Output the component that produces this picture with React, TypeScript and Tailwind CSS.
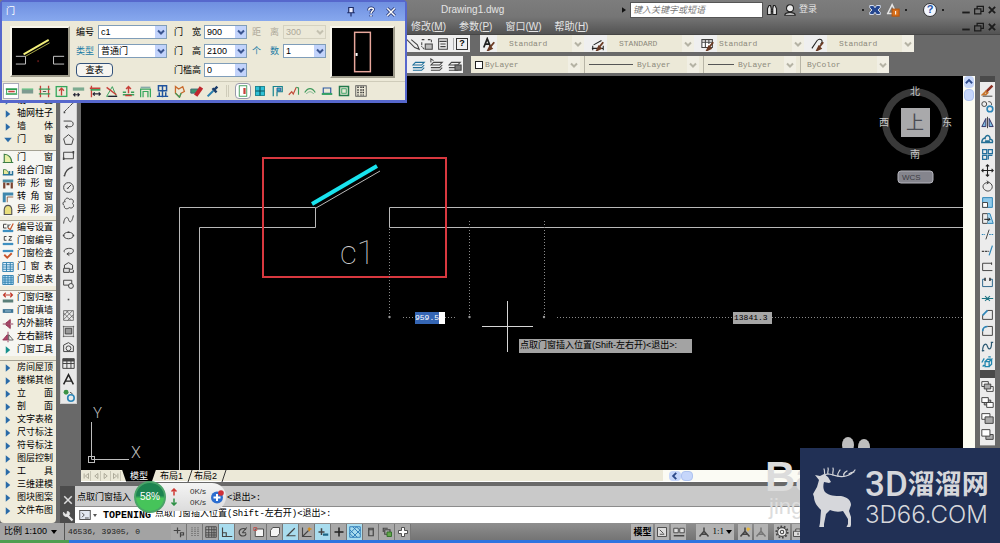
import React, { useState } from "react";

interface IconProps {
  children: React.ReactNode;
  className?: string;
  stroke?: string;
}

interface ToolProps {
  label: string;
  className?: string;
  children: React.ReactNode;
}

interface ComboProps {
  label: string;
  value: string;
  className?: string;
  disabled?: boolean;
}

const Icon = ({ children, className = "h-3.5 w-3.5", stroke = "#444444" }: IconProps) => (
  <svg viewBox="0 0 16 16" className={`block shrink-0 ${className}`} fill="none" stroke={stroke} strokeWidth="1.2">
    {children}
  </svg>
);

const Tool = ({ label, className = "", children }: ToolProps) => (
  <button aria-label={label} title={label} className={`flex shrink-0 items-center justify-center ${className}`}>
    {children}
  </button>
);

const Chevron = ({ stroke }: { stroke: string }) => (
  <svg viewBox="0 0 10 10" className="h-2.5 w-2.5" fill="none" stroke={stroke} strokeWidth="2">
    <path d="M2 3.5 L5 6.5 L8 3.5" />
  </svg>
);

const Combo = ({ label, value, className = "w-[43px]", disabled = false }: ComboProps) => (
  <div className={`relative h-[14px] border ${disabled ? "border-[#d5d2c0]" : "border-[#7f9db9]"} ${className}`}>
    <select
      aria-label={label}
      disabled={disabled}
      className={`block h-full w-full appearance-none pl-0.5 text-[9px] leading-3 ${
        disabled ? "bg-[#ece9d8] text-[#aca899]" : "bg-white text-black"
      }`}
    >
      <option>{value}</option>
    </select>
    <span
      className={`pointer-events-none absolute inset-y-0 right-0 flex w-[11px] items-center justify-center ${
        disabled ? "bg-[#ebe8d8]" : "bg-[#c2d3fb]"
      }`}
    >
      <Chevron stroke={disabled ? "#c4c1b0" : "#3a5590"} />
    </span>
  </div>
);

const FlatCombo = ({ label, value, className = "" }: ComboProps) => (
  <div className="relative h-full">
    <select
      aria-label={label}
      className={`block h-full appearance-none bg-[#ece9d8] font-['Liberation_Mono',monospace] text-[8px] text-[#8c8a7c] ${className}`}
    >
      <option>{value}</option>
    </select>
    <span className="pointer-events-none absolute inset-y-0 right-0 flex w-3 items-center justify-center bg-[#f1efe4]">
      <Chevron stroke="#b5b3a5" />
    </span>
  </div>
);

/* ---------- door dialog ---------- */

const doorTools = [
  { name: "自由插入", art: <><path d="M1 5h14M1 11h14" stroke="#2e9e50" strokeWidth="2" /><path d="M4 8h8" stroke="#c8413a" strokeWidth="2" /><path d="M2 6v4M14 6v4" stroke="#2e9e50" /></> },
  { name: "沿墙插入", art: <><path d="M1 8h14" stroke="#7d9a90" strokeWidth="5" /><path d="M1 5h14" stroke="#36b768" /></> },
  { name: "轴线等分", art: <><path d="M3 1v14M13 1v14" stroke="#c8413a" strokeWidth="1.6" /><path d="M1 5h14M1 11h14" stroke="#37a05a" strokeWidth="1.6" /><path d="M6 8h4" stroke="#555" /></> },
  { name: "墙段等分", art: <><rect x="1.500" y="2" width="13" height="12" stroke="#36a75c" strokeWidth="1.6" /><path d="M8 13V5M5 7l3-3 3 3" stroke="#c8413a" strokeWidth="1.6" /></> },
  { name: "垛宽定距", art: <><path d="M1 5h14" stroke="#7dab90" strokeWidth="4" /><path d="M2 12h7M4 10l-2 2 2 2M7 10l2 2-2 2" stroke="#223" strokeWidth="1.4" /></> },
  { name: "轴线定距", art: <><path d="M3 1v14M1 4h13" stroke="#c8413a" strokeWidth="1.6" /><path d="M2 6h12" stroke="#37a05a" strokeWidth="2" /><path d="M5 11h9M7 9l-2 2 2 2M12 9l2 2-2 2" stroke="#223" strokeWidth="1.4" /></> },
  { name: "按角度插入", art: <><path d="M2 14L9 2l5 12z" stroke="#37a05a" /><path d="M2 3l12 9" stroke="#c8413a" strokeWidth="1.8" /><path d="M4 14h11" stroke="#223" strokeWidth="1.6" /></> },
  { name: "满墙插入", art: <><path d="M1 12h14M1 9h4M11 9h4" stroke="#37a05a" strokeWidth="1.8" /><path d="M8 10V2M5 5l3-3 3 3M4 13h8" stroke="#c8413a" strokeWidth="1.8" /></> },
  { name: "插入上层", art: <><path d="M2 15V5h12v10M5 15V8h6v7" stroke="#36a75c" strokeWidth="1.5" /><path d="M2 3h12" stroke="#8aa" strokeWidth="2" /></> },
  { name: "洞口", art: <><path d="M3 1h10v6H3zM3 7h10M8 1v14M1 14h14M4 9v5M12 9v5" stroke="#21549e" strokeWidth="1.8" /></> },
  { name: "异形插入", art: <><path d="M3 2l4 3 5-3 2 6-4 2-2 5-5-5z" stroke="#c96a2c" strokeWidth="1.6" /><path d="M3 10l5 5 2-5" stroke="#3f9a5b" strokeWidth="1.6" /></> },
  { name: "替换", art: <><path d="M1 5h9v5H1z" fill="#3e9a74" stroke="#3e6a74" /><path d="M7 13l7-10" stroke="#c0272d" strokeWidth="5" /></> },
  { name: "拾取参数", art: <><path d="M2 14l7-7" stroke="#2b7fae" strokeWidth="2.500" /><path d="M8 4l5 5M10 6l4-4" stroke="#1b3d6b" strokeWidth="3" /></> },
];

const kindTools = [
  { name: "插门", art: <><rect x="3" y="1" width="10" height="14" stroke="#3c9a58" /><path d="M10 4v8" stroke="#c8413a" strokeWidth="3" /></> },
  { name: "插窗", art: <><rect x="2" y="2" width="12" height="12" fill="#2fc0d6" stroke="#16838f" /><path d="M8 2v12M2 8h12" stroke="#08525e" strokeWidth="1.5" /></> },
  { name: "插门连窗", art: <><path d="M3 15V2h12v7H8v6" stroke="#16838f" strokeWidth="1.600" /><path d="M8 4h5v4H8z" fill="#39b4c4" stroke="#2a58a0" /></> },
  { name: "插子母门", art: <><path d="M1 13l4-4 2 3 4-9" stroke="#c04a38" strokeWidth="1.5" /><path d="M11 3l3 1v9" stroke="#3f9a5b" strokeWidth="1.5" /></> },
  { name: "插弧窗", art: <><path d="M1 10c4-7 10-7 14 0" stroke="#3f9a5b" strokeWidth="1.600" /><path d="M3 12c3-4 7-4 10 0" stroke="#79b58b" /></> },
  { name: "插凸窗", art: <><path d="M3 4h10v7H3z" stroke="#2a58a0" strokeWidth="1.5" /><path d="M1 12h14" stroke="#2fa060" strokeWidth="2.500" /></> },
  { name: "插矩形洞", art: <><rect x="2" y="2" width="12" height="12" stroke="#237a4c" strokeWidth="2" /><rect x="5" y="5" width="6" height="6" stroke="#2fa060" /></> },
  { name: "标准构件库", art: <><rect x="1" y="1" width="14" height="14" stroke="#555" /><path d="M4 2v12M8 2v12M11 2v12" stroke="#333" strokeDasharray="2 1.500" strokeWidth="2" /></> },
];

const DoorDialog = () => (
  <section className="absolute left-0 top-0 z-20 w-[407px] rounded-t border-2 border-b-[3px] border-[#5667cc] bg-[#ece9d8]">
    <header className="flex h-[19px] items-center bg-gradient-to-b from-[#6f8fe0] to-[#87a8ee] pl-1 pr-1.5 text-[9px] text-white">
      <h2 className="flex-1">门</h2>
      <div className="flex gap-1">
        <Tool label="固定" className="h-4 w-4">
          <Icon className="h-3 w-3" stroke="#1e2c66"><path d="M5 2h6v7H5zM3 9h10M8 9v5" fill="#eef" strokeWidth="1.600" /></Icon>
        </Tool>
        <Tool label="帮助" className="h-4 w-4">
          <Icon className="h-3 w-3" stroke="#fff">
            <path d="M5 6c0-5 7-4 6-1-1 2-3 2-3 5M8 12v2" stroke="#1e2c66" strokeWidth="4" />
            <path d="M5 6c0-5 7-4 6-1-1 2-3 2-3 5M8 12v2" strokeWidth="2" />
          </Icon>
        </Tool>
        <Tool label="关闭" className="h-4 w-4">
          <Icon className="h-3 w-3" stroke="#fff">
            <path d="M3 3l10 10M13 3L3 13" stroke="#1e2c66" strokeWidth="4" />
            <path d="M3 3l10 10M13 3L3 13" strokeWidth="2" />
          </Icon>
        </Tool>
      </div>
    </header>

    <div className="flex h-[60px] items-start px-2 pt-1">
      <svg viewBox="0 0 58 48" className="mr-1.5 mt-px h-[51px] w-[60px] border-2 border-[#f8f6ec] border-b-[#9d9a8a] border-r-[#9d9a8a] bg-black" fill="none">
        <path d="M12 27L38 12" stroke="#f3f07a" strokeWidth="2" />
        <path d="M14 29L39 15" stroke="#a9a948" />
        <path d="M4 29h10v8H4M54 29H43v8h11" stroke="#c8c8c8" />
        <path d="M27 33v2" stroke="#a02828" />
      </svg>
      <div className="flex flex-col gap-[5px] text-[9px] leading-[14px]">
        <div className="flex gap-1">
          <span className="w-[18px]">编号</span>
          <Combo label="编号" value="c1" className="w-[69px]" />
        </div>
        <div className="flex gap-1">
          <a href="#type" className="w-[18px] text-[#1b7ca6]">类型</a>
          <Combo label="类型" value="普通门" className="w-[69px]" />
        </div>
        <button className="h-[14px] w-[37px] rounded-sm border border-[#33527a] bg-[#f6f5f0] leading-3">查表</button>
      </div>
      <div className="ml-[7px] flex flex-col gap-[5px] text-[9px] leading-[14px]">
        {[["门 宽", "900"], ["门 高", "2100"], ["门槛高", "0"]].map(([name, value]) => (
          <div key={name} className="flex gap-[3px]">
            <span className="w-[27px] [text-align-last:justify]">{name}</span>
            <Combo label={name} value={value} />
          </div>
        ))}
      </div>
      <div className="ml-[5px] flex flex-col gap-[5px] text-[9px] leading-[14px]">
        <div className="flex gap-1">
          <span className="w-[27px] text-[#aca899] [text-align-last:justify]">距 离</span>
          <Combo label="距离" value="300" disabled />
        </div>
        <div className="flex gap-1">
          <a href="#count" className="w-[27px] text-[#1b7ca6] [text-align-last:justify]">个 数</a>
          <Combo label="个数" value="1" />
        </div>
      </div>
      <svg viewBox="0 0 62 48" className="ml-1 mt-px h-[52px] w-[65px] shrink-0 border-2 border-[#f8f6ec] border-b-[#9d9a8a] border-r-[#9d9a8a] bg-black" fill="none">
        <rect x="23" y="4" width="16" height="40" stroke="#e8a79c" strokeWidth="1.500" />
        <path d="M25 25v3" stroke="#fff" strokeWidth="2" />
      </svg>
    </div>

    <div className="flex h-[19px] items-center border-t border-[#cfccba] pl-px">
      <div className="flex w-[218px] items-center justify-between">
        {doorTools.map((t, i) => (
          <Tool key={t.name} label={t.name} className={`h-4 w-4 ${i === 0 ? "border border-[#aab] bg-white" : ""}`}>
            <Icon className="h-[13px] w-[13px]">{t.art}</Icon>
          </Tool>
        ))}
      </div>
      <span className="ml-[5px] mr-1.5 h-3 w-[3px] border-x border-[#cfccba]" />
      <div className="flex w-[134px] items-center justify-between">
        {kindTools.map((t, i) => (
          <Tool key={t.name} label={t.name} className={`h-4 w-4 ${i === 0 ? "rounded-sm border border-[#99a] bg-white" : ""}`}>
            <Icon className="h-3 w-3">{t.art}</Icon>
          </Tool>
        ))}
      </div>
    </div>
  </section>
);

/* ---------- title, menu and style bars ---------- */

const WindowButtons = () => (
  <div className="flex items-center gap-px">
    <Tool label="最小化" className="w-3"><Icon className="h-2.5 w-2.5" stroke="#1c1c1c"><path d="M2 12h12" strokeWidth="3" /></Icon></Tool>
    <Tool label="还原" className="w-3"><Icon className="h-2.5 w-2.5" stroke="#1c1c1c"><path d="M5 5V2h10v8h-4M1 6h10v8H1z" strokeWidth="2" /></Icon></Tool>
    <Tool label="关闭" className="w-3"><Icon className="h-2.5 w-2.5" stroke="#1c1c1c"><path d="M3 3l10 10M13 3L3 13" strokeWidth="3" /></Icon></Tool>
  </div>
);

const TitleBar = () => (
  <header className="h-[35px] border-b border-[#454545] bg-gradient-to-b from-[#7d7d7d] via-[#757575] to-[#535353] text-[10px] text-[#e4e4e4]">
    <div className="flex h-[19px] items-center pl-[441px] pr-0.5">
      <h1 className="flex-1">Drawing1.dwg</h1>
      <svg viewBox="0 0 6 8" className="mr-1 h-2 w-1" fill="#111"><path d="M0 0l6 4-6 4z" /></svg>
      <input
        aria-label="搜索"
        placeholder="键入关键字或短语"
        className="h-4 w-[133px] border border-[#555] bg-white px-0.5 text-[9px] italic placeholder:text-[#777]"
      />
      <Tool label="查找" className="ml-0.5 w-[14px]">
        <Icon className="h-3 w-3" stroke="#222"><path d="M2 6l2-4h2l1 4v8H2zM14 6l-2-4h-2L9 6v8h5zM7 7h2M7 10h2" fill="#e5e5e5" strokeWidth="1.500" /></Icon>
      </Tool>
      <button className="ml-1 flex items-center gap-0.5 text-[9px]">
        <Icon className="h-[14px] w-[14px]" stroke="#222"><circle cx="8" cy="6" r="4" fill="#eee" /><path d="M2 14c0-4 12-4 12 0z" fill="#eee" /></Icon>
        登录
      </button>
      <div className="ml-[45px] flex items-center gap-[5px]">
        <span className="h-0.5 w-0.5 bg-[#222]" />
        <Tool label="交换" className="w-3">
          <Icon className="h-3 w-3" stroke="#dfe6f5"><path d="M1 2h5l2 3 2-3h5v3l-3 3 3 3v3h-5l-2-3-2 3H1v-3l3-3-3-3z" fill="#24468f" /></Icon>
        </Tool>
        <Tool label="应用程序" className="w-3.5">
          <Icon stroke="#e6e6e6"><path d="M2 12L7 2l4 8M1 12h7" strokeWidth="1.800" /><rect x="7" y="7" width="8" height="8" fill="#d8701c" stroke="#b5560e" /><path d="M11 9v4" stroke="#fff" /></Icon>
        </Tool>
        <span className="h-0.5 w-0.5 bg-[#222]" />
      </div>
      <Tool label="帮助" className="ml-4 mr-[5px] h-[14px] w-[14px] rounded-full border border-[#333] bg-[#f4f7ff] text-[11px] font-bold text-[#2455a8]">?</Tool>
      <span className="mr-4 h-0.5 w-0.5 bg-[#222]" />
      <WindowButtons />
    </div>
    <nav className="flex h-4 items-center gap-[13px] pl-[411px] pr-0.5">
      {[["修改", "M"], ["参数", "P"], ["窗口", "W"], ["帮助", "H"]].map(([name, key]) => (
        <button key={key} className="leading-4">{name}(<u>{key}</u>)</button>
      ))}
      <span className="flex-1" />
      <WindowButtons />
    </nav>
  </header>
);

const brush = <path d="M14 6l-5 6M9 11l-2 4 4-2z" stroke="#6b3a24" strokeWidth="2.200" />;
const layers = <path d="M4 5h10l-3 3H1zM1 11h10l3-3M1 14h10l3-3" />;

const StyleBars = () => (
  <div className="flex flex-col gap-1 pb-[3px]">
    <div className="flex h-[17px] pl-[407px]">
      <div className="flex items-center bg-[#efefef] pr-0.5">
        <Tool label="标注" className="w-3"><Icon><path d="M1 3l9 9 5 2-2-5-7-6" /></Icon></Tool>
        <Tool label="参照" className="w-4"><Icon><path d="M2 3h4M9 3h4v4M2 6v5M5 14l-3-3" strokeDasharray="3 1" /><path d="M6 8h8v6H6z" fill="#bbb" /></Icon></Tool>
        <Tool label="计算器" className="w-4"><Icon><path d="M3 2h10v12H3zM4 5h8M5 8h6M5 11h6" /></Icon></Tool>
        <span className="mx-0.5 h-3 border-l border-[#aaa]" />
        <Tool label="帮助" className="h-3 w-3 border border-[#333] text-[9px] font-bold">?</Tool>
      </div>
      <div className="ml-2.5 flex items-center bg-[#efefef]">
        <Tool label="文字样式" className="w-[17px]"><Icon><path d="M2 12L6 2l4 10M3 8h6" stroke="#222" strokeWidth="2" />{brush}</Icon></Tool>
        <FlatCombo label="文字样式" value="Standard" className="w-[87px] pl-3" />
        <Tool label="标注样式" className="ml-1 w-[19px]"><Icon><path d="M1 13h13M2 10v5M14 10v5M3 9l9-5" stroke="#222" />{brush}</Icon></Tool>
        <FlatCombo label="标注样式" value="STANDARD" className="w-[87px] pl-3" />
        <Tool label="表格样式" className="ml-1 w-[19px]"><Icon><path d="M1 3h12v9H1zM1 6h12M5 3v9M9 3v5" fill="#fff" />{brush}</Icon></Tool>
        <FlatCombo label="表格样式" value="Standard" className="w-[87px] pl-0.5" />
        <Tool label="引线样式" className="ml-1 w-[19px]"><Icon><path d="M1 13L7 4c4-4 8 1 4 4" stroke="#222" />{brush}</Icon></Tool>
        <FlatCombo label="引线样式" value="Standard" className="w-[87px] pl-3" />
      </div>
    </div>
    <div className="flex h-[17px] pl-[407px]">
      <div className="flex items-center gap-0.5 bg-[#efefef] pl-1">
        <Tool label="图层特性" className="w-4"><Icon stroke="#1f6f9a">{layers}</Icon></Tool>
        <Tool label="图层上一个" className="w-4"><Icon>{layers}<path d="M1 5V1l3 2" /></Icon></Tool>
        <Tool label="图层状态" className="w-4"><Icon>{layers}<path d="M8 8h7v6H8z" fill="#777" /></Icon></Tool>
      </div>
      <div className="ml-2 flex items-center gap-1 bg-[#ece9d8] pl-1">
        <span className="-mr-0.5 h-2 w-2 border border-[#222] bg-white" />
        <FlatCombo label="颜色" value="ByLayer" className="w-[95px]" />
        <span className="h-full border-l border-[#b8b5a6]" />
        <span className="h-px w-11 bg-[#555]" />
        <FlatCombo label="线型" value="ByLayer" className="w-[62px]" />
        <span className="h-full border-l border-[#b8b5a6]" />
        <span className="h-px w-[26px] bg-[#555]" />
        <FlatCombo label="线宽" value="ByLayer" className="w-[58px]" />
        <span className="h-full border-l border-[#b8b5a6]" />
        <FlatCombo label="打印样式" value="ByColor" className="w-[84px] pl-0.5" />
      </div>
    </div>
  </div>
);

/* ---------- left palette ---------- */

const arrow = <path d="M5 3l6 5-6 5z" fill="#2a6ba8" stroke="none" />;
const opened = <path d="M3 5h10l-5 6z" fill="#2a6ba8" stroke="none" />;

const palette = [
  [
    { name: "设 置", art: arrow },
    { name: "轴网柱子", art: arrow },
    { name: "墙 体", art: arrow },
    { name: "门 窗", art: opened },
  ],
  [
    { name: "门 窗", art: <path d="M3 14V3c6 0 10 5 10 11M1 14h14" stroke="#3c7d45" fill="#e8f0a8" strokeWidth="1.500" /> },
    { name: "组合门窗", art: <><path d="M2 13V6c5 0 7 3 7 7" fill="#e8e89a" stroke="#3c7d45" /><path d="M1 13h14M10 8v5M14 8v5" stroke="#29739a" strokeWidth="2" /></> },
    { name: "带 形 窗", art: <><path d="M1 4h14" stroke="#4b8aa0" strokeWidth="4" /><path d="M3 14V6M13 14V6M6 8h4" stroke="#7b4430" strokeWidth="3" /></> },
    { name: "转 角 窗", art: <><path d="M3 15V4h12" stroke="#3f87ad" strokeWidth="4" /><path d="M7 15V8h8" stroke="#8c5a3c" /></> },
    { name: "异 形 洞", art: <path d="M3 14V7c1-7 9-7 10 0v7z" fill="#eadf7c" stroke="#555" strokeWidth="1.500" /> },
  ],
  [
    { name: "编号设置", art: <><path d="M6 3H2v5h4M8 3v5M8 6l3-3" stroke="#333" /><path d="M8 8l3 2 4-8" stroke="#c8562c" strokeWidth="1.600" /><path d="M1 12h14" stroke="#3d8fc0" strokeWidth="3" /></> },
    { name: "门窗编号", art: <><path d="M6 2H3v5h3M9 2h4L9 7h4" stroke="#333" /><path d="M1 12h14" stroke="#3d8fc0" strokeWidth="3" /></> },
    { name: "门窗检查", art: <><path d="M1 4h14" stroke="#3d8fc0" strokeWidth="3" /><path d="M3 9l4 4 6-6" stroke="#c8562c" strokeWidth="2.500" /></> },
    { name: "门 窗 表", art: <path d="M1 2h14v12H1zM1 5h14M1 8h14M1 11h14M6 2v12M11 2v12" fill="#dff0fb" stroke="#2e7fae" /> },
    { name: "门窗总表", art: <path d="M1 2h14v12H1zM1 5h14M1 8h14M1 11h14M4 2v12M8 2v12M12 2v12" fill="#b9dff5" stroke="#2e7fae" /> },
  ],
  [
    { name: "门窗归整", art: <><path d="M2 4h12M5 1L2 4l3 3M11 1l3 3-3 3" stroke="#c0392b" strokeWidth="1.500" /><path d="M1 12h14" stroke="#5c7f79" strokeWidth="4" /></> },
    { name: "门窗填墙", art: <><path d="M1 8h14" stroke="#3f7595" strokeWidth="5" /><path d="M4 8h8" stroke="#a9cbdc" /></> },
    { name: "内外翻转", art: <><path d="M1 8h14" stroke="#8d3050" /><path d="M5 7l6-5v5zM5 9l6 5V9z" fill="#b1476a" stroke="#8d3050" /></> },
    { name: "左右翻转", art: <><path d="M8 1v14" stroke="#8d3050" /><path d="M7 12V5l-6 7z" fill="#b1476a" stroke="#8d3050" /><path d="M9 12V5l6 7z" stroke="#555" /></> },
    { name: "门窗工具", art: <path d="M5 3l6 5-6 5z" fill="#17908c" stroke="none" /> },
  ],
  [
    { name: "房间屋顶", art: arrow },
    { name: "楼梯其他", art: arrow },
    { name: "立 面", art: arrow },
    { name: "剖 面", art: arrow },
    { name: "文字表格", art: arrow },
    { name: "尺寸标注", art: arrow },
    { name: "符号标注", art: arrow },
    { name: "图层控制", art: arrow },
    { name: "工 具", art: arrow },
    { name: "三维建模", art: arrow },
    { name: "图块图案", art: arrow },
    { name: "文件布图", art: arrow },
  ],
];

const Palette = () => (
  <aside className="flex w-14 shrink-0 flex-col gap-1 self-start rounded-b bg-[#efecdc] pb-1.5 pt-[18px]">
    {palette.map((group, i) => (
      <ul
        key={i}
        className={`${i > 0 ? "border-t border-[#a5a294]" : ""} ${i > 0 && i < 4 ? "bg-[#f6f6f2]" : ""}`}
      >
        {group.map((item) => (
          <li key={item.name}>
            <button className="flex h-[13px] w-full items-center gap-[3px] pl-0.5 text-[9px] leading-[13px] text-black">
              <Icon className="h-3 w-3">{item.art}</Icon>
              <span className="w-9 whitespace-nowrap [text-align-last:justify]">{item.name}</span>
            </button>
          </li>
        ))}
      </ul>
    ))}
  </aside>
);

/* ---------- draw and modify toolbars ---------- */

const drawTools = [
  { name: "直线", art: <path d="M3 13L13 3" /> },
  { name: "构造线", art: <><path d="M3 13L13 3" strokeDasharray="4 1" /><path d="M2 14h2M12 2h2" strokeWidth="2" /></> },
  { name: "多段线", art: <path d="M2 5h8c5 0 5 7 0 7H5M7 10l-3 2 3 2" /> },
  { name: "正多边形", art: <path d="M8 2l6 5-2 7H4L2 7z" /> },
  { name: "矩形", art: <><path d="M2 4h12v8H2z" /><path d="M1 12h2M13 4h2" strokeWidth="3" /></> },
  { name: "圆弧", art: <path d="M3 14C4 8 7 4 13 3M2 13h2M12 2v2" strokeWidth="1.500" /> },
  { name: "圆", art: <><circle cx="8" cy="8" r="6" /><path d="M7 9l4-4M6 9h2" /></> },
  { name: "修订云线", art: <path d="M4 3c2-3 5-1 5 0 5-2 6 3 4 5 3 3 0 7-4 5-3 3-7 1-6-2-3-2-2-6 1-5-1-1-1-2 0-3z" /> },
  { name: "样条曲线", art: <path d="M2 13C3 4 7 4 8 8s4 5 6-5" /> },
  { name: "椭圆", art: <><ellipse cx="8" cy="8" rx="6" ry="4" /><path d="M1 8h2M13 8h2M8 3v2" strokeWidth="2" /></> },
  { name: "椭圆弧", art: <path d="M3 9C0 4 14 2 14 7c0 4-5 4-7 4M9 9l-3 2 3 2" /> },
  { name: "插入块", art: <><path d="M3 9V5l5-3 5 3v5H5" /><path d="M2 9h7v5H2zM10 14h4v-3" fill="#ddd" /></> },
  { name: "创建块", art: <><path d="M2 4h10v6H2z" /><circle cx="11" cy="11" r="3" fill="#e8e8e8" /></> },
  { name: "点", art: <path d="M7 8h2" strokeWidth="2" /> },
  { name: "图案填充", art: <path d="M2 2h12v12H2zM2 8l6-6M2 13L13 2M7 14l7-7M2 5l9 9M5 2l9 9" strokeWidth=".8" /> },
  { name: "渐变色", art: <><path d="M1 2h14M2 1v14M14 1v14M1 14h14" strokeWidth=".8" /><path d="M4 4h8v7H4z" fill="#999" /></> },
  { name: "面域", art: <><path d="M2 13V5l6-3 6 4v7z" /><circle cx="8" cy="9" r="3" /></> },
  { name: "表格", art: <><path d="M1 2h14v12H1zM1 8h14M6 2v12M11 2v12" /><path d="M1 4h14" strokeWidth="3" /></> },
  { name: "多行文字", art: <path d="M2 14L8 2l6 12M4 10h8" stroke="#222" strokeWidth="1.800" /> },
  { name: "添加选定对象", art: <><circle cx="5" cy="4" r="3" fill="#3b9347" stroke="none" /><circle cx="11" cy="11" r="4" stroke="#2d86b8" strokeWidth="2" /><path d="M10 4l3 2" /></> },
];

const modifyTools = [
  { name: "删除", art: <><path d="M14 2L6 10" stroke="#8b2f22" strokeWidth="3" /><path d="M7 8l-5 5h4l3-3" stroke="#c8762c" strokeWidth="2" /><path d="M2 15h12" /></> },
  { name: "复制", art: <><circle cx="4" cy="5" r="3" /><circle cx="11" cy="11" r="3.500" stroke="#2d86b8" strokeWidth="2" /><path d="M9 2c3 0 4 1 4 4" /></> },
  { name: "镜像", art: <><path d="M8 1v14" /><path d="M6 3v10H1zM10 3v10h5z" fill="#7fbde0" stroke="#336" /></> },
  { name: "偏移", art: <path d="M1 13h13c1-3-1-4-3-4 1-6-6-6-6-1-3-1-4 3-4 5zM5 11h6" stroke="#247096" strokeWidth="1.800" /> },
  { name: "阵列", art: <path d="M2 2h5v5H2zM9 2h5v5H9zM2 9h5v5H2zM9 14V9h5" stroke="#246f9c" strokeWidth="1.500" /> },
  { name: "移动", art: <path d="M8 1v14M1 8h14M6 3l2-2 2 2M6 13l2 2 2-2M3 6L1 8l2 2M13 6l2 2-2 2" stroke="#222" strokeWidth="1.300" /> },
  { name: "旋转", art: <path d="M10 3c8 4 2 13-4 10S2 3 9 3M7 1l3 2-3 2" /> },
  { name: "缩放", art: <><path d="M2 2h12v12H2z" fill="#8ec9ea" stroke="#2d86b8" /><path d="M2 8h6v6H2z" fill="#fff" /></> },
  { name: "拉伸", art: <><path d="M2 2h6v12H2z" /><path d="M8 2h3l4 12H8" fill="#a9d7f0" stroke="#2d86b8" /><path d="M4 9h7M9 7l2 2-2 2" stroke="#111" /></> },
  { name: "修剪", art: <><path d="M1 8h4M10 8h5" stroke="#2d86b8" strokeDasharray="2 1" strokeWidth="1.500" /><path d="M10 2L6 14" /></> },
  { name: "延伸", art: <><path d="M1 9h9" strokeDasharray="3 1" strokeWidth="1.500" /><path d="M14 2l-4 12" stroke="#2d86b8" strokeWidth="1.500" /></> },
  { name: "打断于点", art: <path d="M2 4h11v1M2 4v9h12M13 3v3" /> },
  { name: "打断", art: <><path d="M5 4H2v9h12V4h-3" stroke="#2d668b" /><path d="M5 2v4M11 2v4" stroke="#111" strokeWidth="1.500" /></> },
  { name: "合并", art: <path d="M1 8h14M5 5l3 3-3 3M11 5L8 8l3 3" stroke="#1f7585" strokeWidth="1.300" /> },
  { name: "倒角", art: <><path d="M2 14V9l6-6h6v11z" /><path d="M2 9l6-6" stroke="#2d86b8" strokeWidth="2" /></> },
  { name: "圆角", art: <><path d="M2 14V9c0-4 3-6 6-6h6v11z" /><path d="M2 9c0-4 3-6 6-6" stroke="#2d86b8" strokeWidth="2" /></> },
  { name: "光顺曲线", art: <path d="M2 14c0-7 2-9 4-9s2 6 4 6 3-3 3-8M1 13h3M12 3h3" stroke="#2a5872" strokeWidth="1.500" /> },
  { name: "分解", art: <path d="M5 7h5v6H5zM5 7l3-3h5l-3 3M13 4v6l-3 3M1 8l3-5M2 13l2-2M9 1h3" stroke="#1f85ae" strokeWidth="1.600" /> },
];

const orderTools = [
  { name: "前置", art: <><path d="M1 2h8v6H1zM7 8h8v6H7z" fill="#fff" /><path d="M4 5h8v6H4z" fill="#aaa" /></> },
  { name: "后置", art: <><path d="M4 5h8v6H4z" fill="#aaa" /><path d="M1 2h8v6H1zM7 8h8v6H7z" fill="#fff" /></> },
  { name: "置于对象之上", art: <><path d="M1 2h10v7H1z" fill="#fff" /><path d="M5 6h10v8H5z" fill="#aaa" /></> },
  { name: "置于对象之下", art: <><path d="M6 8h9v6H6z" fill="#aaa" /><path d="M1 2h10v8H1z" fill="#fff" /></> },
];

const DrawBar = () => (
  <div className="mr-1 mt-1.5 flex w-[17px] shrink-0 flex-col items-center self-start border border-[#cfcfcf] bg-[#e9e9e9]">
    {drawTools.map((t) => (
      <Tool key={t.name} label={t.name} className="h-4 w-4"><Icon className="h-[13px] w-[13px]">{t.art}</Icon></Tool>
    ))}
  </div>
);

const ModifyBar = () => (
  <div className="ml-[5px] mr-[5px] flex w-[15px] shrink-0 flex-col items-center self-start bg-[#ececec]">
    <span className="h-1.5 w-full bg-[#4a4a4a]" />
    {modifyTools.map((t) => (
      <Tool key={t.name} label={t.name} className="h-4 w-4"><Icon className="h-[13px] w-[13px]">{t.art}</Icon></Tool>
    ))}
    <span className="h-2 w-full bg-[#4a4a4a]" />
    {orderTools.map((t) => (
      <Tool key={t.name} label={t.name} className="h-4 w-4"><Icon className="h-[13px] w-[13px]">{t.art}</Icon></Tool>
    ))}
    <span className="h-1 w-full border-b border-[#999]" />
  </div>
);

/* ---------- drawing ---------- */

const Drawing = () => (
  <div className="relative min-h-0 flex-1 overflow-hidden bg-black">
    <svg viewBox="81 76 882 394" preserveAspectRatio="xMinYMin slice" className="absolute inset-0 h-full w-full" fill="none">
      <g stroke="#b9b9b9">
        <path d="M179.500 470V207.500H315.500V227.500H199.500V470" />
        <path d="M963 207.500H389.500V227.500H963" />
        <path d="M316 208L380 171" />
      </g>
      <path d="M312 204L377 166" stroke="#19e3ee" strokeWidth="4" />
      <rect x="263" y="158" width="183" height="119" stroke="#d8383f" strokeWidth="2" />
      <g stroke="#8a8a8a" strokeDasharray="1 2">
        <path d="M389.500 229V316M469.500 221V316M544.500 221V316" />
        <path d="M403 317.500H415M445 317.500H457M557 317.500H733M772 317.500H963" />
      </g>
      <g fill="#9a9a9a">
        <circle cx="389.500" cy="317" r="1.200" />
        <circle cx="469.500" cy="317" r="1.200" />
        <circle cx="544" cy="317" r="1.200" />
      </g>
      <path d="M507.500 301V352M482 326.500H533" stroke="#d6d6d6" />
      <text x="340" y="264" fontSize="33" fontWeight="100" fontFamily="Roboto, sans-serif" fill="#d0d0d0">c1</text>

      <g stroke="#bdbdbd">
        <path d="M91.500 422V459.500H129" />
        <rect x="88.500" y="456.500" width="6" height="6" />
      </g>
      <text x="93" y="418" fontSize="15" fontWeight="300" fontFamily="Roboto, sans-serif" fill="#bdbdbd">Y</text>
      <text x="131" y="458" fontSize="16" fontWeight="300" fontFamily="Roboto, sans-serif" fill="#bdbdbd">X</text>

      <circle cx="915.500" cy="122" r="30" stroke="#393939" strokeWidth="7" />
      <rect x="901" y="108" width="29" height="29" fill="#a9a9ab" />
      <g fontSize="10" textAnchor="middle" fill="#c9c9c9">
        <text x="915" y="95">北</text>
        <text x="915" y="158">南</text>
        <text x="884" y="126">西</text>
        <text x="947" y="126">东</text>
        <text x="915" y="129" fontSize="18" fill="#4b4d55">上</text>
      </g>
      <rect x="898" y="171" width="35" height="12" rx="3" fill="#85858d" stroke="#b4b4bc" />
      <text x="902" y="180" fontSize="8" fill="#3c3c44">WCS</text>
    </svg>

    <input
      aria-label="左侧距离"
      defaultValue="959.5"
      className="absolute left-[334px] top-[236px] h-3 w-[30px] bg-white bg-[linear-gradient(#3566b4,#3566b4)] bg-[length:24px_12px] bg-no-repeat font-['Liberation_Mono',monospace] text-[8px] leading-3 text-white"
    />
    <input
      aria-label="右侧距离"
      defaultValue="13841.3"
      className="absolute left-[652px] top-[236px] h-3 w-[39px] bg-[#a6a6a6] pl-px font-['Liberation_Mono',monospace] text-[8px] leading-3 text-black"
    />
    <p className="absolute left-[438px] top-[263px] h-[14px] w-[173px] whitespace-nowrap bg-[#a3a3a3] pl-px text-[9px] leading-3 text-black">
      点取门窗插入位置(Shift-左右开)&lt;退出&gt;:
    </p>
  </div>
);

const LayoutTabs = () => {
  const [tab, setTab] = useState("模型");

  return (
    <div className="flex h-3 shrink-0 items-center border-b border-white bg-[#ece9d8] text-[9px] leading-3">
      <div className="flex">
        {["M5 4v8M12 4L7 8l5 4z", "M11 4L6 8l5 4z", "M5 4l5 4-5 4z", "M4 4l5 4-5 4zM11 4v8"].map((d, i) => (
          <Tool key={d} label={["首个", "上一个", "下一个", "末个"][i]} className="h-2.5 w-2.5 border-r border-[#c8c5b4]">
            <Icon className="h-2.5 w-2.5" stroke="#999685"><path d={d} /></Icon>
          </Tool>
        ))}
      </div>
      {["模型", "布局1", "布局2"].map((name) => (
        <button
          key={name}
          onClick={() => setTab(name)}
          className={
            tab === name
              ? "ml-px mr-1 h-3 w-[34px] bg-black text-white [clip-path:polygon(0_0,100%_0,88%_100%,12%_100%)]"
              : "flex w-[34px] items-center whitespace-nowrap"
          }
        >
          {name}
          {tab !== name && (
            <svg viewBox="0 0 6 12" className="ml-1 h-3 w-1.5" stroke="#333"><path d="M1 12L5 0" /></svg>
          )}
        </button>
      ))}
      <span className="flex-1" />
      <div className="flex h-full w-[300px] items-center bg-[#fbfbf4] pl-1.5">
        <Tool label="向左滚动" className="h-2.5 w-3 rounded-sm bg-[#c6d6fa]">
          <Icon className="h-2.5 w-2.5" stroke="#2d4a8a"><path d="M10 3L5 8l5 5" strokeWidth="3" /></Icon>
        </Tool>
        <span className="h-2.5 w-3 rounded-sm border border-[#aec3f0] bg-[#c6d6fa]" />
      </div>
    </div>
  );
};

const ScrollBar = () => (
  <div className="flex w-3 shrink-0 flex-col items-center gap-px bg-[#fcfcf3]">
    <Tool label="向上滚动" className="h-3 w-2.5 rounded-sm bg-[#c6d6fa]">
      <Icon className="h-2.5 w-2.5" stroke="#2d4a8a"><path d="M3 10l5-5 5 5" strokeWidth="3" /></Icon>
    </Tool>
    <span className="h-3 w-2.5 rounded-sm border border-[#aec3f0] bg-[#c6d6fa]" />
  </div>
);

const CommandLine = () => (
  <section className="flex h-[37px] shrink-0 text-[9px] text-black">
    <div className="flex w-[15px] flex-col items-center justify-between bg-[#4c4c4c] pb-px pt-2">
      <Tool label="关闭命令行" className="w-3"><Icon className="h-3 w-3" stroke="#ddd"><path d="M3 3l10 10M13 3L3 13" strokeWidth="2" /></Icon></Tool>
      <Tool label="自定义" className="w-3">
        <Icon className="h-3 w-3" stroke="#e6e6e6"><path d="M6 6l8 8" strokeWidth="3" /><path d="M2 3l3 3 2-1V2c4 0 4 5 1 6-4 2-7-1-6-5z" fill="#e6e6e6" /></Icon>
      </Tool>
    </div>
    <div className="flex flex-1 flex-col">
      <p className="flex h-[21px] items-end gap-24 border-b border-[#8c8c8c] bg-[#c9c9c9] pb-px pl-0.5 font-['Liberation_Mono','Noto_Sans_CJK_SC',monospace]">
        <span>点取门窗插入</span>
        <span>&lt;退出&gt;:</span>
      </p>
      <div className="flex h-4 items-center bg-white pl-1">
        <Icon className="h-3 w-3"><rect x="1" y="2" width="14" height="12" fill="#e3e8f2" /><path d="M4 5l3 3-3 3M8 12h5" /></Icon>
        <svg viewBox="0 0 4 3" className="ml-0.5 mr-1.5 h-[3px] w-1" fill="#555"><path d="M0 0h4L2 3z" /></svg>
        <label htmlFor="command" className="font-['Liberation_Mono',monospace] text-[10px] font-bold">TOPENING</label>
        <input
          id="command"
          defaultValue="点取门窗插入位置(Shift-左右开)<退出>:"
          className="ml-1 min-w-0 flex-1 bg-transparent font-['Liberation_Mono','Noto_Sans_CJK_SC',monospace] text-[9px]"
        />
      </div>
    </div>
  </section>
);

/* ---------- status bar ---------- */

const statusTools = [
  { name: "推断约束", on: false, art: <path d="M1 6h9M6 2v8M10 15V9h4v3h-4" strokeWidth="1.600" /> },
  { name: "捕捉模式", on: false, art: <path d="M4 2v12M8 2v12M12 2v12" strokeDasharray="1 1.500" strokeWidth="1.500" /> },
  { name: "栅格显示", on: false, art: <path d="M1 1h14v14H1zM1 5h14M1 9h14M1 12h14M5 1v14M9 1v14M12 1v14" /> },
  { name: "正交模式", on: true, art: <path d="M2 2v12h13M2 9h5v5" strokeWidth="1.500" /> },
  { name: "极轴追踪", on: false, art: <><path d="M12 5c-4-4-10 0-9 5 2 5 9 4 9 0M7 9l6-7M7 9h5" strokeWidth="1.500" /></> },
  { name: "对象捕捉", on: false, art: <><path d="M3 4h11v10H3z" fill="#f4f4f4" /><path d="M1 2h4v4H1z" stroke="#c0504d" /></> },
  { name: "三维对象捕捉", on: false, art: <path d="M5 2h9v8l-3 4H2V6z" fill="#f4f4f4" /> },
  { name: "对象捕捉追踪", on: true, art: <path d="M13 3L3 13h11" strokeWidth="1.600" /> },
  { name: "动态UCS", on: false, art: <><path d="M2 2v12h12M2 14L10 6" strokeWidth="1.500" /><path d="M9 4h5M11 2v5" stroke="#d08b1e" strokeWidth="2" /></> },
  { name: "动态输入", on: true, art: <><path d="M2 8h8M6 3v9" strokeWidth="2" /><path d="M8 10h7v3H8z" fill="#1c6787" stroke="none" /></> },
  { name: "线宽", on: false, art: <path d="M2 8h12M8 2v12" stroke="#222" strokeWidth="2" /> },
  { name: "透明度", on: true, art: <path d="M1 1h14v14H1zM1 5l10 10M1 10l5 5M5 1l10 10M10 1l5 5M1 10l9-9M5 15L15 5" stroke="#2776b4" /> },
  { name: "快捷特性", on: false, art: <path d="M5 3h6v10H5zM5 5h6" strokeWidth="1.600" /> },
  { name: "选择循环", on: false, art: <><path d="M3 8V3h6M5 5h7v6H5z" strokeWidth="1.500" /><path d="M8 8h6v6H8z" fill="#63a64b" stroke="#2c6e26" /></> },
  { name: "注释监视器", on: false, art: <path d="M6 2h4v4h4v4h-4v4H6v-4H2V6h4z" fill="#fff" /> },
];

const person = <path d="M8 2v6M8 7l-6 7M8 7l6 7M5 11h6" strokeWidth="2" />;

const StatusBar = () => (
  <footer className="shrink-0">
    <div className="flex h-[17px] items-center bg-gradient-to-b from-[#8f8f8f] to-[#747474] text-[9px] text-black">
      <button className="flex h-full w-[65px] items-center gap-1 border-r border-[#555] bg-[#a6a6a6] pl-1">
        <span>比例 1:100</span>
        <svg viewBox="0 0 6 4" className="h-1 w-1.5"><path d="M0 0h6L3 4z" /></svg>
      </button>
      <output className="flex h-full w-[106px] items-center bg-[#a3a3a3] pl-[3px] font-['Liberation_Mono',monospace] text-[8px] text-[#222]">
        46536, 39305, 0
      </output>
      {statusTools.map((t) => (
        <Tool key={t.name} label={t.name} className={`h-4 w-4 border-r border-[#777] ${t.on ? "bg-[#a9dcee]" : "bg-[#a9a9a9]"}`}>
          <Icon className="h-3 w-3">{t.art}</Icon>
        </Tool>
      ))}
      <span className="flex-1" />
      <div className="flex h-full items-center gap-0.5">
        <button className="h-4 w-[22px] bg-[#b3b3b3] font-bold leading-4">模型</button>
        <Tool label="快速查看布局" className="h-4 w-[14px] bg-[#b3b3b3]"><Icon className="h-3 w-3"><path d="M2 2h12v12H2zM5 5l5 5M5 11h6" fill="#ddd" /></Icon></Tool>
        <Tool label="快速查看图形" className="h-4 w-[15px] bg-[#b3b3b3]"><Icon className="h-3 w-3"><path d="M1 3h6v6H1zM9 3h6v6H9z" fill="#ddd" /><path d="M1 13h14" strokeWidth="2" /></Icon></Tool>
        <button className="ml-2 flex h-4 items-center gap-0.5 bg-[#b3b3b3] px-0.5 font-['Liberation_Serif',serif]">
          <Icon className="h-3 w-3">{person}</Icon>
          1:1
          <svg viewBox="0 0 6 4" className="h-1 w-1.5"><path d="M0 0h6L3 4z" /></svg>
        </button>
        <Tool label="注释可见性" className="ml-0.5 h-4 w-[14px] bg-[#b3b3b3]"><Icon className="h-3 w-3">{person}<path d="M10 4h5M12 2v5" stroke="#e8b83c" strokeWidth="2" /></Icon></Tool>
        <Tool label="自动添加比例" className="h-4 w-[14px] bg-[#b3b3b3]"><Icon className="h-3 w-3" stroke="#777">{person}</Icon></Tool>
        <Tool label="切换工作空间" className="ml-1 h-4 w-4 bg-[#b3b3b3]"><Icon><circle cx="8" cy="8" r="5" fill="#eee" /><circle cx="8" cy="8" r="2" /><circle cx="8" cy="8" r="6.500" strokeDasharray="2 2" strokeWidth="2" /></Icon></Tool>
        <Tool label="锁定" className="h-4 w-3 bg-[#b3b3b3]"><Icon className="h-3 w-3"><path d="M2 7h12v7H2zM5 7V4h6v3M8 9v3" fill="#ddd" /></Icon></Tool>
      </div>
      <span className="w-[196px]" />
    </div>
    <div className="flex h-[3px]">
      <span className="w-[69px] bg-[#4f9e50]" />
      <span className="flex-1 bg-[#2f74e0]" />
    </div>
  </footer>
);

/* ---------- floating items ---------- */

const SpeedBall = () => (
  <div className="absolute bottom-8 left-[134px] z-10 flex h-7 w-[92px] items-center rounded-full bg-gradient-to-b from-[#f4f4f4] to-[#dcdcdc] text-[8px] text-[#333]">
    <div className="flex h-8 w-8 shrink-0 items-center justify-center rounded-full border-2 border-[#4aa368] bg-gradient-to-b from-[#1c8450] from-45% to-[#46c45a] to-55% font-['Liberation_Sans',sans-serif] text-[10px] leading-3 text-white">
      58%
    </div>
    <div className="ml-1 flex flex-col gap-0.5">
      <Icon className="h-2 w-2" stroke="#d03a34"><path d="M8 15V2M3 7l5-5 5 5" strokeWidth="3" /></Icon>
      <Icon className="h-2 w-2" stroke="#2d9045"><path d="M8 1v13M3 9l5 5 5-5" strokeWidth="3" /></Icon>
    </div>
    <div className="ml-3 flex flex-col leading-[11px]">
      <span>0K/s</span>
      <span>0K/s</span>
    </div>
    <svg viewBox="0 0 14 14" className="ml-1 h-3.5 w-3.5 shrink-0">
      <circle cx="7" cy="7.500" r="6" fill="#2c6ed0" />
      <path d="M7 4v7M3.500 7.500h7" stroke="#fff" strokeWidth="2" />
      <circle cx="11" cy="3" r="2.800" fill="#cf3038" />
    </svg>
  </div>
);

const Watermark = () => (
  <div className="pointer-events-none absolute bottom-0 right-0 z-10 h-[108px] w-[232px] font-['Liberation_Sans',sans-serif] text-[#dcdcdc]">
    <svg viewBox="0 0 30 16" className="absolute left-[73px] top-0 h-4 w-[30px]" fill="#bdbdbd">
      <ellipse cx="7" cy="10" rx="6" ry="8" />
      <ellipse cx="23" cy="12" rx="6" ry="8" />
    </svg>
    <p className="absolute left-[-3px] top-[21px] text-[42px] font-bold leading-[42px]">Ba</p>
    <p className="absolute left-px top-[60px] text-[22px] leading-[24px]">jing</p>
  </div>
);

const Deer = () => (
  <svg viewBox="0 0 44 60" className="h-[60px] w-11 shrink-0" fill="#d6d7db">
    <path d="M2 8l5 1 4-2 4 3 3 5-2 1-5-1c-1 4-1 7 1 10 4 4 10 4 16 4 6 1 10 4 10 9l-2 6 2 6v8l-1 3h-4l2-4v-5l-5-8c-4 1-8 1-13-1l-4 4-2 10v4H6l1-5 1-13C4 39 1 35 1 30l-1-3 4-7 2-7z" />
    <g fill="none" stroke="#d6d7db" strokeWidth="1.200" strokeLinecap="round">
      <path d="M12 8c2-2 5-1 8 0s9 2 13 1 7-3 9-6" />
      <path d="M12 8c-1-2 0-4-1-6M15 7c-1-2 1-4 0-6M20 8c-1-3 1-4 0-7M25 9c-1-3 1-4 2-6M31 9c-1-2 1-4 3-5M36 7c1-1 3-2 5-2" />
    </g>
  </svg>
);

const Brand = () => (
  <a
    href="#3d66"
    className="absolute bottom-0 right-0 z-20 flex h-[95px] w-[200px] items-start bg-[#213055] pl-[13px] pt-[19px] text-[#d6d7db]"
  >
    <Deer />
    <span className="ml-2 flex flex-col">
      <span className="flex items-center whitespace-nowrap text-[27px] font-bold leading-[36px]">
        <span className="font-['Roboto',sans-serif] text-[35px] font-medium">3D</span>溜溜网
      </span>
      <span className="font-['Inter',sans-serif] text-[24px] font-light leading-[24px]">3D66.COM</span>
    </span>
  </a>
);

export default function App() {
  return (
    <div className="relative flex h-screen flex-col overflow-hidden bg-[#696969] font-['Liberation_Sans','Noto_Sans_CJK_SC',sans-serif]">
      <TitleBar />
      <StyleBars />
      <main className="flex min-h-0 flex-1">
        <Palette />
        <div className="flex min-w-0 flex-1 flex-col pl-1">
          <div className="mb-1 flex min-h-0 flex-1">
            <DrawBar />
            <div className="flex min-w-0 flex-1 flex-col">
              <Drawing />
              <LayoutTabs />
            </div>
            <ScrollBar />
            <ModifyBar />
          </div>
          <CommandLine />
        </div>
      </main>
      <StatusBar />
      <DoorDialog />
      <SpeedBall />
      <Watermark />
      <Brand />
    </div>
  );
}
